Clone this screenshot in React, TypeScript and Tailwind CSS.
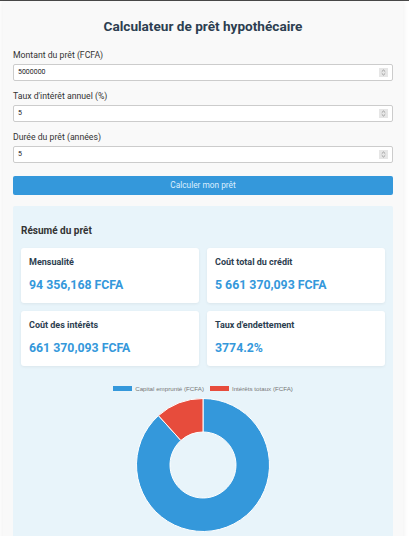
import React from 'react'

const FONT = { fontFamily: 'Roboto, "Noto Sans", Arial, sans-serif' }

function Field({ label, value }: { label: string; value: string }) {
  return (
    <div className="mt-[9px] first:mt-0">
      <div className="text-[8.7px] leading-[12px] text-[#333]">{label}</div>
      <div className="mt-[3px] h-[17px] flex items-center justify-between border border-[#ccc] rounded-[2px] bg-white pl-[4px] pr-[4px]">
        <span className="text-[7px] text-[#222]">{value}</span>
        <span className="w-[9px] h-[9px] bg-[#e6e6e6] flex flex-col items-center justify-center">
          <svg width="5" height="7" viewBox="0 0 5 7" fill="none" stroke="#8a8a8a" strokeWidth="0.8">
            <path d="M0.8 2.6 L2.5 1 L4.2 2.6" />
            <path d="M0.8 4.4 L2.5 6 L4.2 4.4" />
          </svg>
        </span>
      </div>
    </div>
  )
}

function Card({ title, value }: { title: string; value: string }) {
  return (
    <div className="bg-white rounded-[3px] shadow-[0_1px_3px_rgba(0,0,0,0.06)] h-[55px] px-[8px] pt-[8px]">
      <div className="text-[9px] leading-[12px] font-bold text-[#2c3e50]">{title}</div>
      <div className="mt-[9px] text-[12.3px] leading-[16px] font-bold text-[#3498db]">{value}</div>
    </div>
  )
}

function arc(cx: number, cy: number, r0: number, r1: number, a0: number, a1: number) {
  const p = (r: number, a: number) => {
    const t = ((a - 90) * Math.PI) / 180
    return [cx + r * Math.cos(t), cy + r * Math.sin(t)]
  }
  const large = a1 - a0 > 180 ? 1 : 0
  const [x1, y1] = p(r1, a0)
  const [x2, y2] = p(r1, a1)
  const [x3, y3] = p(r0, a1)
  const [x4, y4] = p(r0, a0)
  return `M${x1} ${y1} A${r1} ${r1} 0 ${large} 1 ${x2} ${y2} L${x3} ${y3} A${r0} ${r0} 0 ${large} 0 ${x4} ${y4} Z`
}

function Donut() {
  const capital = 5000000000
  const interest = 661370093
  const split = (capital / (capital + interest)) * 360
  return (
    <svg width="140" height="140" viewBox="0 0 140 140">
      <path d={arc(70, 70, 33, 66.5, 0, split)} fill="#3498db" stroke="#fff" strokeWidth="1" />
      <path d={arc(70, 70, 33, 66.5, split, 360)} fill="#e74c3c" stroke="#fff" strokeWidth="1" />
    </svg>
  )
}

export default function App() {
  return (
    <div className="min-h-screen bg-white" style={FONT}>
      <div className="h-px bg-[#4a4a4a]" />
      <div className="w-[400px] ml-[3px] bg-[#f9f9f9] shadow-[0_0_6px_rgba(0,0,0,0.08)] px-[10px] pt-[15px] pb-[20px]">
        <h1 className="text-center text-[13.6px] leading-[20px] font-bold text-[#2c3e50]">
          Calculateur de prêt hypothécaire
        </h1>
        <div className="mt-[13px]">
          <Field label="Montant du prêt (FCFA)" value="5000000" />
          <Field label="Taux d'intérêt annuel (%)" value="5" />
          <Field label="Durée du prêt (années)" value="5" />
        </div>
        <button className="mt-[13px] w-full h-[19px] rounded-[2px] bg-[#3498db] text-[8.3px] text-[#dcefff]">
          Calculer mon prêt
        </button>
        <div className="mt-[11px] bg-[#e8f4fa] rounded-[2px] px-[8px] pt-[18px] pb-[20px]">
          <h3 className="text-[10px] leading-[13px] font-bold text-[#333]">Résumé du prêt</h3>
          <div className="mt-[11px] grid grid-cols-2 gap-[8px]">
            <Card title="Mensualité" value="94 356,168 FCFA" />
            <Card title="Coût total du crédit" value="5 661 370,093 FCFA" />
            <Card title="Coût des intérêts" value="661 370,093 FCFA" />
            <Card title="Taux d'endettement" value="3774.2%" />
          </div>
          <div className="mt-[18px] flex justify-center items-center gap-[6px] text-[6.2px] leading-[9px] text-[#777]" style={{ fontFamily: '"Liberation Sans", Arial, sans-serif' }}>
            <span className="flex items-center gap-[3px]">
              <span className="w-[19px] h-[5px] bg-[#3498db]" />
              Capital emprunté (FCFA)
            </span>
            <span className="flex items-center gap-[3px]">
              <span className="w-[19px] h-[5px] bg-[#e74c3c]" />
              Intérêts totaux (FCFA)
            </span>
          </div>
          <div className="mt-[2px] flex justify-center">
            <Donut />
          </div>
        </div>
      </div>
    </div>
  )
}
